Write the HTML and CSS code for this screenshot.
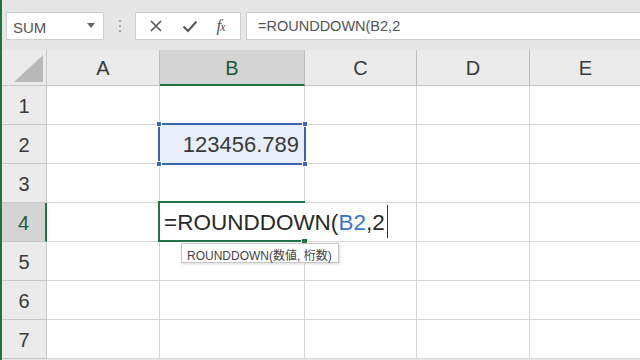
FILE: index.html
```html
<!DOCTYPE html>
<html lang="ja">
<head>
    <meta charset="UTF-8">
    <title>ROUNDDOWN</title>
    <link rel="stylesheet" href="styles.css">
</head>
<body>
    <div class="toolbar">
        <div class="namebox">
            <span>SUM</span>
            <svg class="caret" width="8" height="5" viewBox="0 0 8 5"><polygon points="0,0 8,0 4,5" fill="#666"/></svg>
        </div>
        <div class="dots"><i></i><i></i><i></i></div>
        <div class="btns">
            <svg width="14" height="14" viewBox="0 0 14 14"><path d="M2 2 L12 12 M12 2 L2 12" stroke="#555" stroke-width="1.6" fill="none"/></svg>
            <svg width="16" height="14" viewBox="0 0 16 14"><path d="M1.5 7.5 L6 12 L14.5 2.5" stroke="#555" stroke-width="2" fill="none"/></svg>
            <span class="fx"><i>f</i><i class="x">x</i></span>
        </div>
        <div class="formula">=ROUNDDOWN(B2,2</div>
    </div>

    <div class="sheet">
        <div class="hd corner"><svg width="29" height="27" viewBox="0 0 29 27"><polygon points="29,0 29,27 0,27" fill="#b8b8b8"/></svg></div>
        <div class="hd col">A</div>
        <div class="hd col on">B</div>
        <div class="hd col">C</div>
        <div class="hd col">D</div>
        <div class="hd col">E</div>

        <div class="hd row">1</div>
        <div class="c"></div><div class="c"></div><div class="c"></div><div class="c"></div><div class="c"></div>

        <div class="hd row">2</div>
        <div class="c"></div>
        <div class="c b2">
            <div class="sel">
                <span class="num">123456.789</span>
                <b class="h tl"></b><b class="h tr"></b><b class="h bl"></b><b class="h br"></b>
            </div>
        </div>
        <div class="c"></div><div class="c"></div><div class="c"></div>

        <div class="hd row">3</div>
        <div class="c"></div><div class="c"></div><div class="c"></div><div class="c"></div><div class="c"></div>

        <div class="hd row on">4</div>
        <div class="c"></div>
        <div class="c b4">
            <div class="active"></div>
            <div class="editor">=ROUNDDOWN(<span class="ref">B2</span>,2</div>
            <b class="fill"></b>
            <div class="tip">ROUNDDOWN(数値, 桁数)</div>
        </div>
        <div class="c"></div><div class="c"></div><div class="c"></div>

        <div class="hd row">5</div>
        <div class="c"></div><div class="c"></div><div class="c"></div><div class="c"></div><div class="c"></div>

        <div class="hd row">6</div>
        <div class="c"></div><div class="c"></div><div class="c"></div><div class="c"></div><div class="c"></div>

        <div class="hd row">7</div>
        <div class="c"></div><div class="c"></div><div class="c"></div><div class="c"></div><div class="c"></div>
    </div>
</body>
</html>
```

FILE: styles.css
```css
*{margin:0; padding:0; box-sizing:border-box;}
html,body{width:640px; height:360px; overflow:hidden;}
body{background:#e6e6e6; border-left:2px solid #217346; font-family:"Liberation Sans","Noto Sans CJK JP",sans-serif; color:#333;}

.toolbar{display:flex; height:40px; padding:12px 0 0 4px;}
.namebox{width:98px; background:#fff; border:1px solid #d0d0d0; display:flex; align-items:center; justify-content:space-between; padding:2px 8px 0 6px; font-size:15px; color:#555;}
.namebox .caret{margin-top:-4px;}
.dots{width:31px; display:flex; flex-direction:column; align-items:center; justify-content:center; gap:3px;}
.dots i{width:2px; height:2px; background:#aaa;}
.btns{width:106px; background:#fff; border:1px solid #d0d0d0; display:flex; align-items:center; justify-content:space-around; padding:0 6px 0 4px;}
.fx{font-family:"Liberation Serif",serif; font-size:17px; color:#555; letter-spacing:-1px;}
.fx .x{font-size:12px;}
.formula{flex:1; margin-left:5px; background:#fff; border:1px solid #d0d0d0; border-right:none; padding:5px 0 0 11px; font-size:14.5px; color:#555;}

.sheet{display:grid; grid-template-columns:45px 113px 145px 112px 113px 112px; grid-template-rows:36px repeat(7,39px); margin-top:10px;}
.hd{background:#ebebeb; display:flex; align-items:center; justify-content:center; font-size:20px; color:#3a3a3a;}
.corner{border-right:1px solid #c8c8c8; border-bottom:1px solid #c8c8c8; align-items:flex-end; justify-content:flex-end; padding:0 3px 3px 0;}
.col{border-right:1px solid #bdbdbd; border-bottom:1px solid #c8c8c8; padding-top:2px;}
.col.on{background:#d4d4d4; border-bottom:2px solid #217346; color:#1f5a3b;}
.row{border-right:1px solid #c8c8c8; border-bottom:1px solid #c8c8c8; padding-top:3px;}
.row.on{background:#d4d4d4; color:#1f5a3b; border-right:2px solid #217346;}
.c{background:#fff; border-right:1px solid #d6d6d6; border-bottom:1px solid #d6d6d6; position:relative;}

.sel{position:absolute; left:-2px; top:-2px; right:-2px; bottom:-2px; border:2px solid #3b64ae; background:#e8eef8; display:flex; align-items:center; justify-content:flex-end; padding:1px 5px 0 0; z-index:2;}
.num{font-size:22px; color:#3a3a3a;}
.h{position:absolute; width:6px; height:6px; background:#3b64ae; border:1px solid #fff;}
.tl{left:-4px; top:-4px;} .tr{right:-4px; top:-4px;}
.bl{left:-4px; bottom:-4px;} .br{right:-4px; bottom:-4px;}

.active{position:absolute; left:-2px; top:-2px; right:-1px; bottom:-1px; border:2px solid #217346; z-index:2;}
.editor{position:absolute; left:0; top:0; height:37px; width:229px; background:#fff; z-index:3; white-space:nowrap; font-size:22.5px; color:#2a2a2a; padding:3px 0 0 4px; display:flex; align-items:center;}
.editor::after{content:""; position:absolute; left:227px; top:2px; width:1px; height:33px; background:#333;}
.ref{color:#3a73c8;}
.fill{position:absolute; right:-4px; bottom:-4px; width:7px; height:7px; background:#217346; border:1px solid #fff; z-index:4;}
.tip{position:absolute; left:21px; top:40px; width:158px; height:20px; background:#fff; border:1px solid #c6c6c6; box-shadow:1px 1px 2px rgba(0,0,0,.15); font-size:12px; color:#444; padding:2px 0 0 5px; white-space:nowrap; z-index:5;}
```
